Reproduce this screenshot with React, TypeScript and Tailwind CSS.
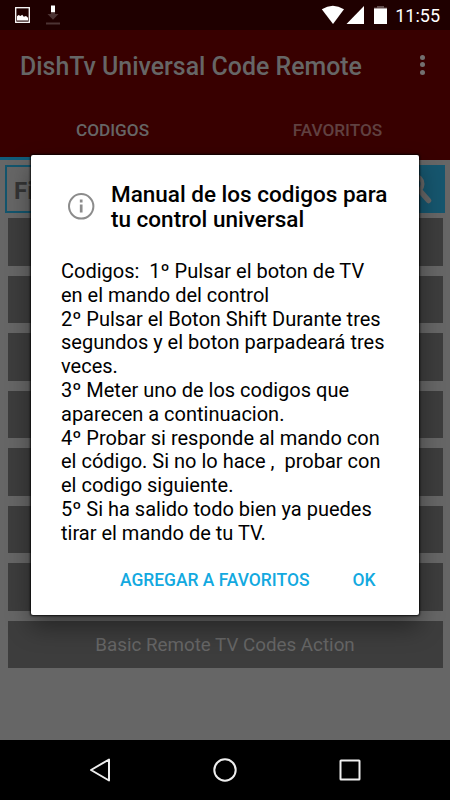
const manual = [
  'Codigos:  1º Pulsar el boton de TV',
  'en el mando del control',
  '2º Pulsar el Boton Shift Durante tres',
  'segundos y el boton parpadeará tres',
  'veces.',
  '3º Meter uno de los codigos que',
  'aparecen a continuacion.',
  '4º Probar si responde al mando con',
  'el código. Si no lo hace ,  probar con',
  'el codigo siguiente.',
  '5º Si ha salido todo bien ya puedes',
  'tirar el mando de tu TV.',
];

const rows = ['', '', '', '', '', '', '', 'Basic Remote TV Codes Action'];

function StatusBar() {
  return (
    <div className="flex h-[30px] items-center justify-between bg-[#1f0000] pr-[10px] text-white">
      <svg width="64" height="30" viewBox="0 0 64 30">
        {/* screenshot notification */}
        <rect x="15.7" y="7.7" width="13.6" height="14.6" fill="none" stroke="#fff" strokeWidth="1.3" />
        <path d="M17 20.5v-4.3l1.5-1.2 2 1 1.7-1.3 1.6 2 2.2-.6 2 1.6v2.8z" fill="#fff" />
        {/* download */}
        <path d="M51 5.5h4v7h-4z" fill="#fff" />
        <path d="M51 12.5h4V14h3.5L53 19.7 47.5 14H51zM46 22.5h14v2H46z" fill="#4c3333" />
      </svg>
      <div className="flex items-center gap-[5px]">
        {/* wifi, signal, battery */}
        <svg width="70" height="30" viewBox="320 0 70 30">
          <path d="M321.8 9.3Q332.8 2.3 344 9.3L333 24z" fill="#fff" />
          <path d="M364 6v18h-17.5z" fill="#fff" />
          <path d="M377 6h7v1.5h3V9h-13V7.5h3z" fill="#624c4c" />
          <path d="M374 8.5h13V24h-13z" fill="#fff" />
        </svg>
        <span className="w-[45px] text-right text-[18px] whitespace-nowrap">11:55</span>
      </div>
    </div>
  );
}

function AppBar() {
  return (
    <header className="flex h-[130px] flex-col bg-[#380000] font-medium text-[#666]">
      <div className="flex h-[71px] items-center justify-between pr-[25px] pl-5">
        <h1 className="pt-[3px] text-[24.9px] font-medium whitespace-nowrap">DishTv Universal Code Remote</h1>
        <div className="flex flex-col gap-[2.5px] pb-[2px]">
          {[0, 1, 2].map(i => (
            <span key={i} className="size-[5px] rounded-full bg-[#737070]" />
          ))}
        </div>
      </div>
      <nav className="grid flex-1 grid-cols-2 text-center text-[17.2px]">
        <div className="flex items-center justify-center border-b-[3px] border-[#115c7a] pt-[4px]">CODIGOS</div>
        <div className="flex items-center justify-center pt-px text-[#604141]">FAVORITOS</div>
      </nav>
    </header>
  );
}

function SearchBar() {
  return (
    <div className="flex h-12 shrink-0">
      <div className="flex flex-1 items-center border-2 border-[#13556d] pt-[3px] pl-[7px] text-[24px] font-bold text-[#343434]">
        Find
      </div>
      <div className="flex w-[48px] items-center justify-center bg-[#16566e]">
        <svg width="40" height="40" viewBox="0 0 40 40" fill="none" stroke="#666" strokeLinecap="round">
          <circle cx="13" cy="15" r="8.5" strokeWidth="4" />
          <path d="M20 23l7.5 8.5" strokeWidth="5.5" />
        </svg>
      </div>
    </div>
  );
}

function NavBar() {
  return (
    <footer className="flex h-[60px] items-center justify-center gap-[101px] bg-black">
      <svg width="24" height="24" viewBox="0 0 24 24" fill="none" stroke="#eee" strokeWidth="2" strokeLinejoin="round">
        <path d="M21 1.5v21L3 12z" />
      </svg>
      <svg width="24" height="24" viewBox="0 0 24 24" fill="none" stroke="#eee" strokeWidth="2">
        <circle cx="12" cy="12" r="10.7" />
      </svg>
      <svg width="24" height="24" viewBox="0 0 24 24" fill="none" stroke="#eee" strokeWidth="2">
        <rect x="2.5" y="2.5" width="19" height="19" rx=".5" />
      </svg>
    </footer>
  );
}

function ManualDialog() {
  return (
    <div className="absolute top-[155px] left-[31px] flex h-[460px] w-[388px] flex-col rounded-[2px] bg-white text-black shadow-[0_12px_24px_rgba(0,0,0,0.4),0_0_2px_1px_rgba(0,0,0,0.8)]">
      <div className="flex items-center gap-[15px] pt-[27px] pl-[36px]">
        <svg width="29" height="29" viewBox="0 0 29 29" fill="none" stroke="#8c8c8c">
          <circle cx="14.2" cy="13.3" r="12.2" strokeWidth="2" />
          <path d="M14.2 11.4v8M14.2 6.6v3" strokeWidth="2.7" />
        </svg>
        <h2 className="text-[22.5px] leading-[25px] font-medium whitespace-nowrap">
          Manual de los codigos para
          <br />
          tu control universal
        </h2>
      </div>
      <div className="mt-[28px] pl-[30px] text-[20px] leading-[23.8px] whitespace-pre">
        {manual.map(line => (
          <p key={line}>{line}</p>
        ))}
      </div>
      <div className="mt-[22px] flex justify-end gap-[43px] pr-[43.5px] text-[17.45px] leading-6 font-medium text-[#13a9e0]">
        <button>AGREGAR A FAVORITOS</button>
        <button>OK</button>
      </div>
    </div>
  );
}

export default function App() {
  return (
    <div className="relative flex h-[800px] w-[450px] flex-col overflow-hidden bg-[#666] font-['Roboto',sans-serif]">
      <StatusBar />
      <AppBar />
      <main className="flex flex-1 flex-col px-[5px] pt-[5px]">
        <SearchBar />
        <div className="mt-[5px] flex flex-col gap-[10px] px-[2.5px]">
          {rows.map((name, i) => (
            <div key={i} className="flex h-[47.5px] items-center justify-center bg-[#3d3d3d] pt-[2px] text-[18.8px] text-[#666]">
              {name}
            </div>
          ))}
        </div>
      </main>
      <NavBar />
      <ManualDialog />
    </div>
  );
}
